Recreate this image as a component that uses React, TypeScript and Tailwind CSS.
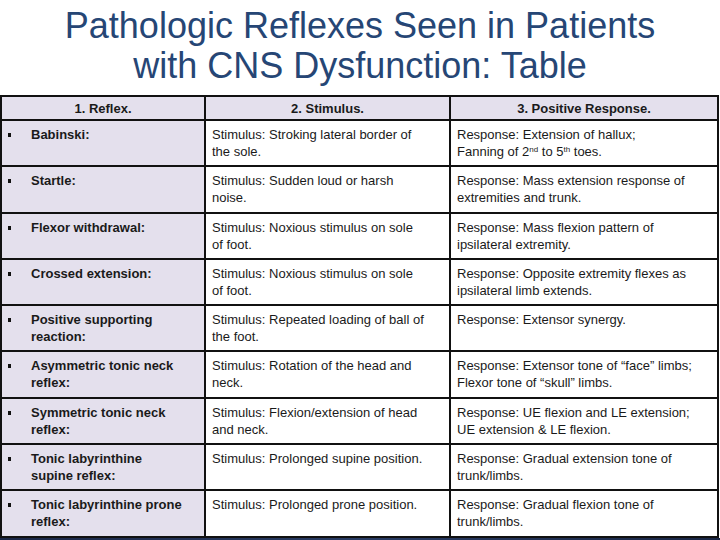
import React from 'react';

type Row = {
  reflex: string[];
  stimulus: React.ReactNode[];
  response: React.ReactNode[];
};

const rows: Row[] = [
  {
    reflex: ['Babinski:'],
    stimulus: ['Stimulus: Stroking lateral border of', 'the sole.'],
    response: [
      'Response: Extension of hallux;',
      <>
        Fanning of 2<sup className="text-[8px]">nd</sup> to 5<sup className="text-[8px]">th</sup> toes.
      </>,
    ],
  },
  {
    reflex: ['Startle:'],
    stimulus: ['Stimulus: Sudden loud or harsh', 'noise.'],
    response: ['Response: Mass extension response of', 'extremities and trunk.'],
  },
  {
    reflex: ['Flexor withdrawal:'],
    stimulus: ['Stimulus: Noxious stimulus on sole', 'of foot.'],
    response: ['Response: Mass flexion pattern of', 'ipsilateral extremity.'],
  },
  {
    reflex: ['Crossed extension:'],
    stimulus: ['Stimulus: Noxious stimulus on sole', 'of foot.'],
    response: ['Response: Opposite extremity flexes as', 'ipsilateral limb extends.'],
  },
  {
    reflex: ['Positive supporting', 'reaction:'],
    stimulus: ['Stimulus: Repeated loading of ball of', 'the foot.'],
    response: ['Response: Extensor synergy.'],
  },
  {
    reflex: ['Asymmetric tonic neck', 'reflex:'],
    stimulus: ['Stimulus: Rotation of the head and', 'neck.'],
    response: ['Response: Extensor tone of “face” limbs;', 'Flexor tone of “skull” limbs.'],
  },
  {
    reflex: ['Symmetric tonic neck', 'reflex:'],
    stimulus: ['Stimulus: Flexion/extension of head', 'and neck.'],
    response: ['Response: UE flexion and LE extension;', 'UE extension & LE flexion.'],
  },
  {
    reflex: ['Tonic labyrinthine', 'supine reflex:'],
    stimulus: ['Stimulus: Prolonged supine position.'],
    response: ['Response: Gradual extension tone of', 'trunk/limbs.'],
  },
  {
    reflex: ['Tonic labyrinthine prone', 'reflex:'],
    stimulus: ['Stimulus: Prolonged prone position.'],
    response: ['Response: Gradual flexion tone of', 'trunk/limbs.'],
  },
];

const Lines: React.FC<{ lines: React.ReactNode[] }> = ({ lines }) => (
  <>
    {lines.map((l, i) => (
      <div key={i} className="whitespace-nowrap">
        {l}
      </div>
    ))}
  </>
);

const App: React.FC = () => {
  return (
    <div
      className="w-[720px] h-[540px] overflow-hidden bg-white flex flex-col"
      style={{ fontFamily: '"Liberation Sans", Arial, sans-serif' }}
    >
      <h1 className="h-[95px] pt-[6px] text-center text-[36px] leading-[40px] text-[#264675] font-normal">
        Pathologic Reflexes Seen in Patients
        <br />
        with CNS Dysfunction: Table
      </h1>

      <div className="w-[719px] bg-[#111] p-[2px] grid grid-cols-[202px_243px_266px] grid-rows-[22px_repeat(9,44.3px)] gap-[2px] text-[13px] leading-[17px] text-[#1a1a1a]">
        <div className="bg-[#e4e0ed] font-bold flex items-center justify-center">1. Reflex.</div>
        <div className="bg-[#e4e0ed] font-bold flex items-center justify-center">2. Stimulus.</div>
        <div className="bg-[#e4e0ed] font-bold flex items-center justify-center">3. Positive Response.</div>

        {rows.map((r, i) => (
          <React.Fragment key={i}>
            <div className="bg-[#e4e0ed] flex pt-[5px] pl-[6px]">
              <span className="w-[3px] h-[4px] bg-[#111] mt-[7px] shrink-0" />
              <div className="pl-[20px] font-bold">
                <Lines lines={r.reflex} />
              </div>
            </div>
            <div className="bg-white pt-[5px] pl-[6px]">
              <Lines lines={r.stimulus} />
            </div>
            <div className="bg-white pt-[5px] pl-[6px]">
              <Lines lines={r.response} />
            </div>
          </React.Fragment>
        ))}
      </div>

      <div className="flex-1 bg-gradient-to-r from-[#1a2747] via-[#2a3d66] to-[#1a2747]" />
    </div>
  );
};

export default App;
